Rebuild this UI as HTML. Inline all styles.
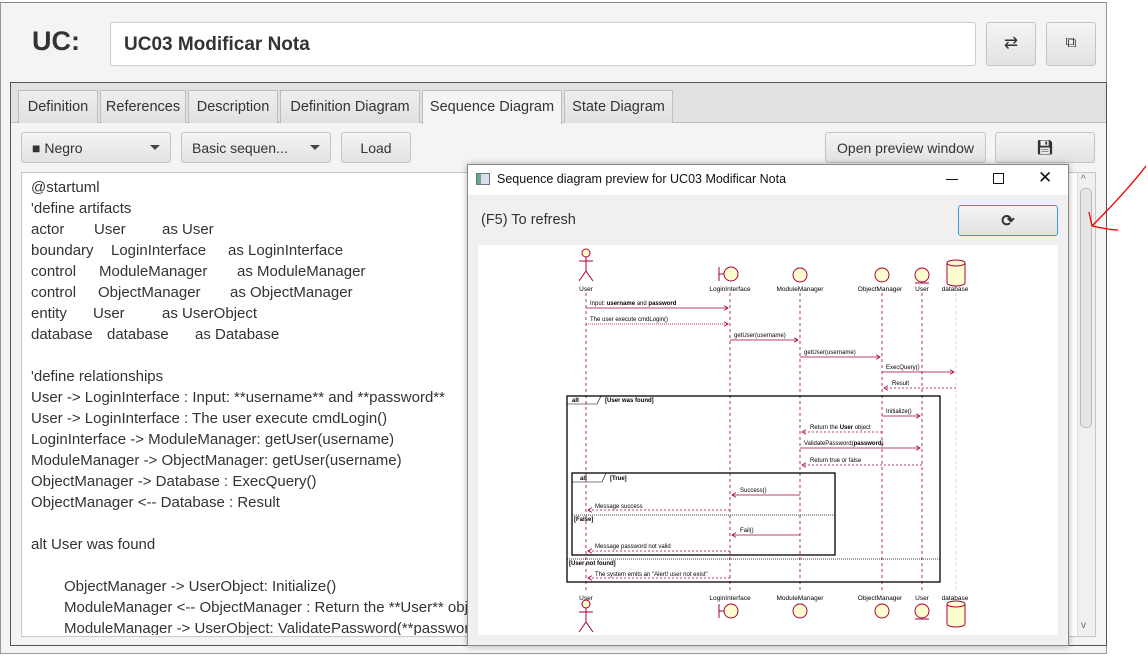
<!DOCTYPE html>
<html><head><meta charset="utf-8"><style>
*{margin:0;padding:0;box-sizing:border-box}
body{width:1148px;height:656px;background:#fff;font-family:"Liberation Sans",sans-serif;position:relative;overflow:hidden;color:#333}
.a{position:absolute}
.btn{position:absolute;border:1px solid #c4c4c4;border-radius:3px;background:linear-gradient(#f4f4f4,#e2e2e2);font-size:14px;color:#333;text-align:center}
.tab{position:absolute;top:90px;height:33px;border:1px solid #bdbdbd;border-bottom:none;background:linear-gradient(#efefef,#e0e0e0);font-size:14.5px;color:#333;padding-top:8px;text-align:center}
.code{position:absolute;font-size:15px;color:#333;white-space:pre;line-height:21px}
.dd:after{content:"";position:absolute;right:10px;top:12px;border:5px solid transparent;border-top:5px solid #444}
</style></head><body>
<div class="a" style="left:0;top:2px;width:1107px;height:652px;background:#f4f4f4;border:1px solid #999;border-top:1px solid #888"></div>
<div class="a" style="left:32px;top:26px;font-size:27px;font-weight:bold;color:#333">UC:</div>
<div class="a" style="left:110px;top:22px;width:866px;height:44px;background:#fff;border:1px solid #ccc;border-radius:3px;font-size:19px;font-weight:bold;padding:11px 0 0 13px">UC03 Modificar Nota</div>
<div class="btn" style="left:986px;top:22px;width:50px;height:44px;font-size:17px;padding-top:10px">⇄</div>
<div class="btn" style="left:1046px;top:22px;width:50px;height:44px;font-size:15px;padding-top:11px">⧉</div>
<div class="a" style="left:10px;top:82px;width:1097px;height:564px;border:1px solid #555;background:#f4f4f4"></div>
<div class="a" style="left:11px;top:83px;width:1095px;height:40px;background:#e1e1e1;border-bottom:1px solid #bdbdbd"></div>
<div class="tab" style="left:18px;width:80px">Definition</div>
<div class="tab" style="left:100px;width:86px">References</div>
<div class="tab" style="left:188px;width:90px">Description</div>
<div class="tab" style="left:280px;width:140px">Definition Diagram</div>
<div class="tab" style="left:422px;width:140px;background:#f4f4f4;height:34px">Sequence Diagram</div>
<div class="tab" style="left:564px;width:109px">State Diagram</div>
<div class="btn dd" style="left:21px;top:132px;width:150px;height:31px;text-align:left;padding:7px 0 0 10px">■ Negro</div>
<div class="btn dd" style="left:181px;top:132px;width:150px;height:31px;text-align:left;padding:7px 0 0 10px">Basic sequen...</div>
<div class="btn" style="left:341px;top:132px;width:70px;height:31px;padding-top:7px">Load</div>
<div class="btn" style="left:825px;top:132px;width:161px;height:31px;padding-top:7px">Open preview window</div>
<div class="btn" style="left:995px;top:132px;width:100px;height:31px;padding-top:6px">💾︎</div>
<div class="a" style="left:21px;top:172px;width:1075px;height:465px;background:#fff;border:1px solid #c8c8c8"></div>
<div class="a" style="left:1077px;top:173px;width:18px;height:463px;background:#f0f0f0;border-left:1px solid #ddd"></div>
<div class="a" style="left:1080px;top:188px;width:12px;height:240px;background:#e6e6e6;border:1px solid #bbb;border-radius:5px"></div>
<div class="a" style="left:1081px;top:174px;font-size:10px;color:#666">^</div>
<div class="a" style="left:1081px;top:620px;font-size:10px;color:#666">v</div>
<div class="code" style="left:31px;top:177px">@startuml
'define artifacts</div>
<div class="code" style="left:31px;top:219px">actor
boundary
control
control
entity
database</div>
<div class="code" style="left:94px;top:219px">User</div><div class="code" style="left:162px;top:219px">as User</div>
<div class="code" style="left:111px;top:240px">LoginInterface</div><div class="code" style="left:228px;top:240px">as LoginInterface</div>
<div class="code" style="left:99px;top:261px">ModuleManager</div><div class="code" style="left:237px;top:261px">as ModuleManager</div>
<div class="code" style="left:98px;top:282px">ObjectManager</div><div class="code" style="left:230px;top:282px">as ObjectManager</div>
<div class="code" style="left:93px;top:303px">User</div><div class="code" style="left:162px;top:303px">as UserObject</div>
<div class="code" style="left:107px;top:324px">database</div><div class="code" style="left:195px;top:324px">as Database</div>
<div class="code" style="left:31px;top:366px">'define relationships
User -> LoginInterface : Input: **username** and **password**
User -> LoginInterface : The user execute cmdLogin()
LoginInterface -> ModuleManager: getUser(username)
ModuleManager -> ObjectManager: getUser(username)
ObjectManager -> Database : ExecQuery()
ObjectManager <-- Database : Result

alt User was found</div>
<div class="a" style="left:22px;top:173px;width:445px;height:462px;overflow:hidden"><div class="code" style="left:42px;top:403px">ObjectManager -> UserObject: Initialize()
ModuleManager <-- ObjectManager : Return the **User** object
ModuleManager -> UserObject: ValidatePassword(**password**)</div></div>
<div class="a" style="left:467px;top:164px;width:602px;height:482px;background:#f0f0f0;border:1px solid #888;box-shadow:0 0 6px rgba(0,0,0,.3)"></div>
<div class="a" style="left:468px;top:165px;width:600px;height:30px;background:#fff"></div>
<div class="a" style="left:476px;top:173px;width:14px;height:12px;border:1px solid #678;background:linear-gradient(90deg,#6a8 0 4px,#dde 4px)"></div>
<div class="a" style="left:497px;top:172px;font-size:12.5px;color:#111">Sequence diagram preview for UC03 Modificar Nota</div>
<div class="a" style="left:946px;top:179px;width:12px;height:1px;background:#111"></div>
<div class="a" style="left:993px;top:173px;width:11px;height:11px;border:1px solid #111"></div>
<div class="a" style="left:1038px;top:168px;font-size:17px;color:#111">✕</div>
<div class="a" style="left:481px;top:212px;font-size:14.5px;color:#333">(F5) To refresh</div>
<div class="btn" style="left:958px;top:205px;width:100px;height:31px;border:1px solid #3d9ad1;padding-top:5px;font-size:16px;font-weight:bold">⟳</div>
<svg class="a" style="left:478px;top:245px" width="580" height="390" viewBox="478 245 580 390" font-family="Liberation Sans,sans-serif" font-size="6.5">
<defs><marker id="m" markerWidth="6" markerHeight="6" refX="5" refY="3" orient="auto"><path d="M0 0 L5 3 L0 6" fill="none" stroke="#a80036" stroke-width="1"/></marker></defs>
<rect x="478" y="245" width="580" height="390" fill="#fff"/>
<g stroke="#a80036" stroke-width="0.8" stroke-dasharray="3,3" fill="none">
<line x1="586" y1="293" x2="586" y2="592"/><line x1="730" y1="293" x2="730" y2="592"/><line x1="800" y1="293" x2="800" y2="592"/><line x1="882" y1="293" x2="882" y2="592"/><line x1="922" y1="293" x2="922" y2="592"/><line x1="956" y1="293" x2="956" y2="592" stroke="#ccc"/>
</g>
<g fill="#fefece" stroke="#a80036" stroke-width="1">
<circle cx="586" cy="253" r="4"/><line x1="586" y1="257" x2="586" y2="271"/><line x1="579" y1="261" x2="593" y2="261"/><polyline points="579,281 586,271 593,281" fill="none"/>
<line x1="719" y1="267" x2="719" y2="281"/><line x1="719" y1="274" x2="724" y2="274"/><circle cx="731" cy="274" r="7"/>
<circle cx="800" cy="275" r="7"/><circle cx="882" cy="275" r="7"/><circle cx="922" cy="275" r="7"/><line x1="915" y1="283" x2="929" y2="283"/>
<path d="M947 263 v20 a9 3 0 0 0 18 0 v-20 a9 3 0 0 0 -18 0 a9 3 0 0 0 18 0" />
<circle cx="586" cy="604" r="4"/><line x1="586" y1="608" x2="586" y2="622"/><line x1="579" y1="612" x2="593" y2="612"/><polyline points="579,632 586,622 593,632" fill="none"/>
<line x1="719" y1="604" x2="719" y2="618"/><line x1="719" y1="611" x2="724" y2="611"/><circle cx="731" cy="611" r="7"/>
<circle cx="800" cy="611" r="7"/><circle cx="882" cy="611" r="7"/><circle cx="922" cy="611" r="7"/><line x1="915" y1="619" x2="929" y2="619"/>
<path d="M947 604 v20 a9 3 0 0 0 18 0 v-20 a9 3 0 0 0 -18 0 a9 3 0 0 0 18 0"/>
</g>
<g fill="#000" text-anchor="middle"><text x="586" y="291">User</text><text x="730" y="291">LoginInterface</text><text x="800" y="291">ModuleManager</text><text x="880" y="291">ObjectManager</text><text x="922" y="291">User</text><text x="955" y="291">database</text>
<text x="586" y="600">User</text><text x="730" y="600">LoginInterface</text><text x="800" y="600">ModuleManager</text><text x="880" y="600">ObjectManager</text><text x="922" y="600">User</text><text x="955" y="600">database</text></g>
<g stroke="#a80036" stroke-width="0.8" marker-end="url(#m)">
<line x1="586" y1="308" x2="728" y2="308"/><line x1="586" y1="324" x2="728" y2="324" stroke-dasharray="1,1"/><line x1="730" y1="340" x2="798" y2="340"/><line x1="800" y1="357" x2="880" y2="357"/><line x1="882" y1="372" x2="954" y2="372"/><line x1="956" y1="388" x2="884" y2="388" stroke-dasharray="2,2"/>
<line x1="882" y1="416" x2="920" y2="416"/><line x1="882" y1="432" x2="802" y2="432" stroke-dasharray="2,2"/><line x1="800" y1="448" x2="920" y2="448"/><line x1="922" y1="465" x2="802" y2="465" stroke-dasharray="2,2"/>
<line x1="800" y1="495" x2="732" y2="495"/><line x1="730" y1="510" x2="588" y2="510" stroke-dasharray="2,2"/><line x1="800" y1="535" x2="732" y2="535"/><line x1="730" y1="551" x2="588" y2="551" stroke-dasharray="2,2"/><line x1="730" y1="578" x2="588" y2="578" stroke-dasharray="2,2"/>
</g>
<g fill="none" stroke="#000"><rect x="567" y="396" width="373" height="186" stroke-width="1.3"/><rect x="572" y="473" width="263" height="82" stroke-width="1.3"/>
<path d="M567 404 h30 l4 -8" stroke-width=".6"/><path d="M572 482 h30 l4 -9" stroke-width=".6"/>
<line x1="572" y1="515" x2="835" y2="515" stroke-dasharray="1,1" stroke-width=".8"/><line x1="567" y1="559" x2="940" y2="559" stroke-dasharray="1,1" stroke-width=".8"/></g>
<g fill="#000" font-size="6"><text x="590" y="305">Input: <tspan font-weight="bold">username</tspan> and <tspan font-weight="bold">password</tspan></text><text x="590" y="321">The user execute cmdLogin()</text><text x="734" y="337">getUser(username)</text><text x="804" y="354">getUser(username)</text><text x="886" y="369">ExecQuery()</text><text x="892" y="385">Result</text>
<text x="572" y="402" font-weight="bold">alt</text><text x="605" y="402" font-weight="bold">[User was found]</text><text x="886" y="413">Initialize()</text><text x="810" y="429">Return the <tspan font-weight="bold">User</tspan> object</text><text x="804" y="445">ValidatePassword(<tspan font-weight="bold">password</tspan>)</text><text x="810" y="462">Return true or false</text>
<text x="580" y="480" font-weight="bold">alt</text><text x="610" y="480" font-weight="bold">[True]</text><text x="740" y="492">Success()</text><text x="595" y="508">Message success</text><text x="574" y="521" font-weight="bold">[False]</text><text x="740" y="532">Fail()</text><text x="595" y="548">Message password not valid</text><text x="569" y="565" font-weight="bold">[User not found]</text><text x="595" y="576">The system emits an "Alert! user not exist"</text></g>
</svg>
<svg class="a" style="left:1080px;top:160px" width="68" height="80"><path d="M66 6 C52 24 34 44 12 66 M12 66 L9 52 M12 66 C22 68 30 70 38 70" stroke="#e00" stroke-width="1.3" fill="none"/></svg>
</body></html>
